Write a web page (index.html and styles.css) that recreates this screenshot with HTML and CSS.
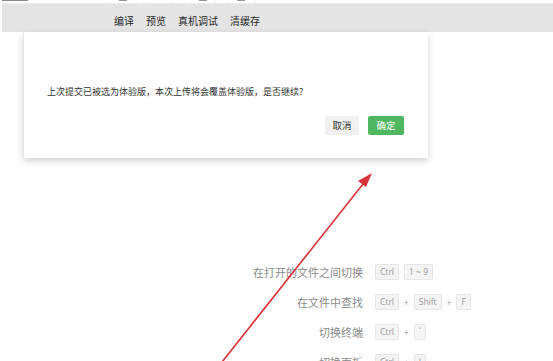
FILE: index.html
```html
<!DOCTYPE html>
<html lang="zh">
<head>
<meta charset="utf-8">
<link rel="stylesheet" href="styles.css">
</head>
<body>
<div class="top-strip">
  <span class="cut-text"></span>
  <span class="cut-box"><i></i></span>
  <span class="cut-box"></span>
  <span class="cut-box"><i></i></span>
  <span class="cut-box"><i></i></span>
</div>
<header class="toolbar">
  <span>编译</span>
  <span>预览</span>
  <span>真机调试</span>
  <span>清缓存</span>
</header>
<main class="workspace">
  <section class="dialog">
    <p class="message">上次提交已被选为体验版，本次上传将会覆盖体验版，是否继续?</p>
    <div class="actions">
      <button class="btn btn-cancel">取消</button>
      <button class="btn btn-ok">确定</button>
    </div>
  </section>

  <div class="shortcuts">
    <span class="label">在打开的文件之间切换</span>
    <span class="keys"><kbd>Ctrl</kbd><kbd>1 ~ 9</kbd></span>
    <span class="label">在文件中查找</span>
    <span class="keys"><kbd>Ctrl</kbd><b>+</b><kbd>Shift</kbd><b>+</b><kbd>F</kbd></span>
    <span class="label">切换终端</span>
    <span class="keys"><kbd>Ctrl</kbd><b>+</b><kbd>`</kbd></span>
    <span class="label">切换面板</span>
    <span class="keys"><kbd>Ctrl</kbd><b>+</b><kbd>J</kbd></span>
  </div>

  <svg class="arrow" width="553" height="329" viewBox="0 0 553 329">
    <line x1="222" y1="330" x2="367" y2="147" stroke="#d8333a" stroke-width="1.6"/>
    <polygon points="372,141 358,149 366,155" fill="#d8333a"/>
  </svg>
</main>
</body>
</html>
```
FILE: styles.css
```css
* { box-sizing: border-box; }
html, body {
  margin: 0;
  padding: 0;
  width: 553px;
  height: 361px;
  overflow: hidden;
  background: #fff;
  font-family: "Noto Sans CJK SC", "Liberation Sans", sans-serif;
}
.top-strip {
  height: 3px;
  display: flex;
  align-items: flex-start;
  background: #fff;
  overflow: hidden;
}
.cut-text {
  width: 26px;
  height: 1px;
  margin-left: 2px;
  background: #888;
}
.cut-box {
  height: 3px;
  background: #fff;
  border-left: 1px solid #f0f0f0;
  border-right: 1px solid #f0f0f0;
  display: flex;
  justify-content: center;
}
.cut-box:nth-child(2) { width: 30px; margin-left: 80px; }
.cut-box:nth-child(3) { width: 26px; margin-left: 10px; }
.cut-box:nth-child(4) { width: 26px; margin-left: 16px; }
.cut-box:nth-child(5) { width: 30px; margin-left: 10px; }
.cut-box i {
  width: 8px;
  height: 1px;
  background: #999;
}
.toolbar {
  height: 29px;
  margin-left: 2px;
  background: #e4e4e4;
  border-top: 1px solid #ededed;
  display: flex;
  align-items: center;
  gap: 12px;
  padding-left: 112px;
  padding-top: 4px;
  font-size: 10px;
  color: #2a2a2a;
}
.workspace {
  position: relative;
  height: 329px;
}
.dialog {
  position: absolute;
  left: 23px;
  top: 0;
  width: 405px;
  height: 126px;
  background: #fff;
  border-left: 1px solid #e6e6e6;
  box-shadow: 0 3px 7px rgba(0, 0, 0, 0.18);
  padding: 53px 24px 0 23px;
  z-index: 2;
}
.message {
  margin: 0;
  font-size: 9px;
  line-height: 14px;
  color: #333;
}
.actions {
  display: flex;
  justify-content: flex-end;
  gap: 9px;
  margin-top: 17px;
}
.btn {
  border: none;
  border-radius: 2px;
  height: 19px;
  padding: 0;
  font-family: inherit;
  font-size: 9.5px;
  line-height: 19px;
}
.btn-cancel {
  width: 34px;
  background: #f1f1f1;
  color: #333;
}
.btn-ok {
  width: 36px;
  background: #4fb75f;
  color: #fff;
}
.shortcuts {
  display: grid;
  grid-template-columns: 363px auto;
  grid-auto-rows: 30px;
  column-gap: 12px;
  align-items: center;
  padding-top: 225px;
}
.label {
  justify-self: end;
  font-size: 11px;
  color: #8a8a8a;
}
.keys {
  display: flex;
  align-items: center;
  gap: 5px;
  font-size: 8.5px;
  color: #9a9a9a;
}
.keys b {
  font-weight: normal;
}
kbd {
  font-family: "Open Sans", "Liberation Sans", sans-serif;
  font-size: 8.5px;
  height: 16px;
  line-height: 14px;
  padding: 0 4px;
  background: #f4f4f4;
  border: 1px solid #e6e6e6;
  border-radius: 2px;
  color: #9a9a9a;
  min-width: 12px;
  text-align: center;
}
.arrow {
  position: absolute;
  left: 0;
  top: 0;
  pointer-events: none;
  z-index: 3;
}
```
